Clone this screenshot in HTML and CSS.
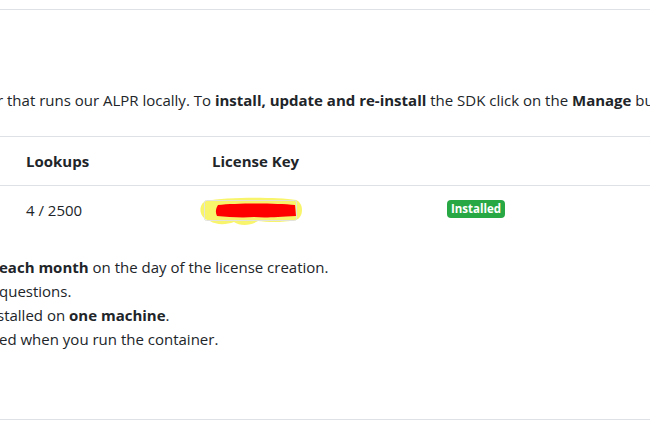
FILE: index.html
```html
<!doctype html>
<html lang="en">
  <head>
    <meta charset="UTF-8" />
    <meta name="viewport" content="width=device-width, initial-scale=1.0" />
    <title>SDK</title>
    <link rel="stylesheet" href="styles.css">
  </head>
  <body>
    <div class="topbar"></div>

    <section class="content">
      <p class="intro">r that runs our ALPR locally. To <b>install, update and re-install</b> the SDK click on the <b>Manage</b> button</p>

      <table class="sdk-table">
        <colgroup>
          <col class="col-lookups" />
          <col class="col-key" />
          <col />
        </colgroup>
        <thead>
          <tr>
            <th>Lookups</th>
            <th>License Key</th>
            <th></th>
          </tr>
        </thead>
        <tbody>
          <tr>
            <td>4 / 2500</td>
            <td>
              <span class="redacted">
                <svg width="110" height="32" viewBox="0 0 110 32">
                  <path d="M10 6 C 30 2, 80 2, 100 5 C 108 8, 108 22, 100 25 C 85 28, 70 27, 62 26 C 54 31, 44 31, 38 27 C 30 30, 20 30, 14 26 C 2 23, 2 9, 10 6 Z" fill="#f8f56c" />
                  <rect x="8.5" y="5.5" width="92" height="20" rx="2" fill="none" stroke="#e2e2da" stroke-width="1" />
                  <path d="M22 10 C 40 8, 80 8, 99 10 L 100 21 C 80 22, 70 23, 58 22 C 46 23, 32 22, 21 21 C 19 17, 20 13, 22 10 Z" fill="#ff0000" />
                </svg>
              </span>
            </td>
            <td><span class="badge">Installed</span></td>
          </tr>
        </tbody>
      </table>

      <ul class="notes">
        <li class="n1"><b>each month</b> on the day of the license creation.</li>
        <li class="n2">questions.</li>
        <li class="n3">stalled on <b>one machine</b>.</li>
        <li class="n4">ed when you run the container.</li>
      </ul>
    </section>

    <div class="bottombar"></div>
  </body>
</html>
```

FILE: styles.css
```css
* {
  margin: 0;
  padding: 0;
  box-sizing: border-box;
}
body {
  font-family: "Open Sans", "Noto Sans", Arial, sans-serif;
  font-size: 15px;
  line-height: 24px;
  color: #212529;
  background: #fff;
  overflow: hidden;
}
b {
  font-weight: 700;
}
.topbar {
  height: 10px;
  border-bottom: 1px solid #dee2e6;
}
.content {
  padding-top: 78px;
}
.intro {
  white-space: nowrap;
  margin-left: -3px;
}
.sdk-table {
  width: 100%;
  margin-top: 24px;
  border-collapse: collapse;
  table-layout: fixed;
}
.col-lookups {
  width: 200px;
}
.col-key {
  width: 235px;
}
.sdk-table th,
.sdk-table td {
  text-align: left;
  padding: 12px;
  vertical-align: middle;
}
.sdk-table th {
  border-top: 1px solid #dee2e6;
  border-bottom: 1px solid #dee2e6;
  font-weight: 700;
}
.sdk-table th:first-child,
.sdk-table td:first-child {
  padding-left: 26px;
}
.redacted {
  display: block;
  height: 24px;
  margin-left: -16px;
  position: relative;
}
.redacted svg {
  position: absolute;
  left: 0;
  top: -3px;
}
.badge {
  display: inline-block;
  background: #28a745;
  color: #fff;
  font-size: 11.5px;
  font-weight: 700;
  line-height: 12px;
  padding: 3px 4px;
  border-radius: 4px;
  vertical-align: 3px;
}
.notes {
  list-style: none;
  margin-top: 21px;
  white-space: nowrap;
}
.n1 {
  margin-left: -1px;
}
.n2 {
  margin-left: -1px;
}
.n3 {
  margin-left: -3px;
}
.n4 {
  margin-left: -1px;
}
.bottombar {
  margin-top: 68px;
  border-bottom: 1px solid #dee2e6;
}
```
